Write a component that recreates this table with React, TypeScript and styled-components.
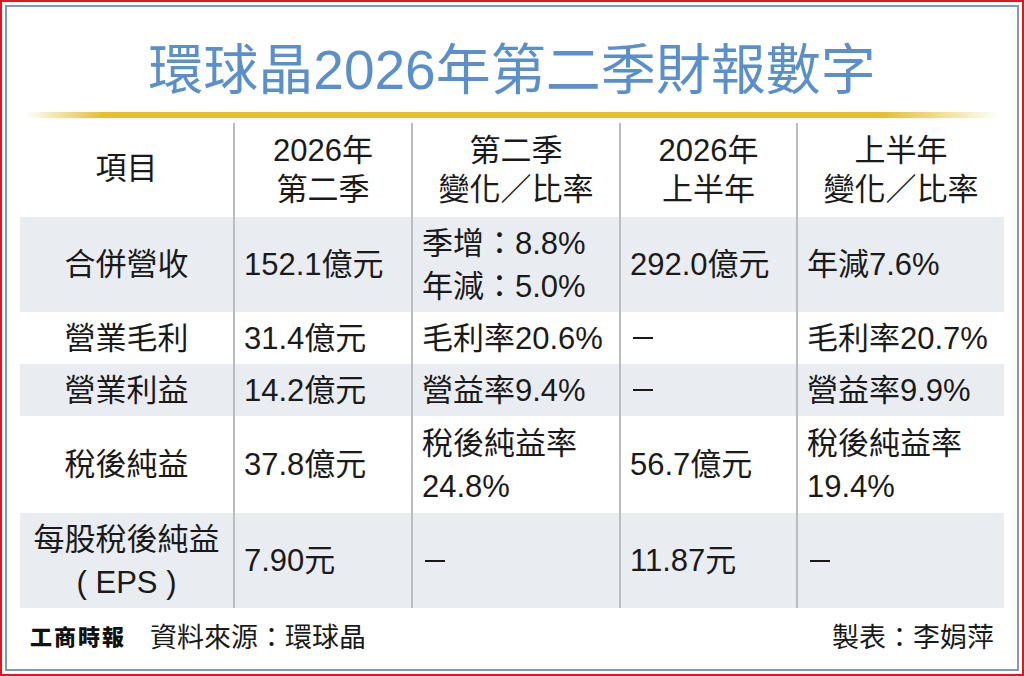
import styled, { createGlobalStyle } from 'styled-components';

const GlobalStyle = createGlobalStyle`
  html, body {
    margin: 0;
    padding: 0;
    background: #ffffff;
  }
  body {
    font-family: "Liberation Sans", "Noto Sans CJK TC", sans-serif;
    color: #1a1a1a;
  }
`;

const Page = styled.div`
  box-sizing: border-box;
  width: 1024px;
  height: 676px;
  border: 2px solid #e3141b;
  padding: 3px;
  background: #ffffff;
`;

const Frame = styled.div`
  box-sizing: border-box;
  height: 100%;
  border: 2px solid #7d9bb2;
  padding: 0 13px;
  display: flex;
  flex-direction: column;
`;

const Title = styled.h1`
  margin: 0;
  padding-top: 23px;
  height: 70px;
  line-height: 70px;
  text-align: center;
  font-family: "Noto Sans CJK TC", "Liberation Sans", sans-serif;
  font-size: 55px;
  font-weight: 400;
  color: #5b8fca;
`;

const TitleDigits = styled.span`
  font-family: "Liberation Sans", sans-serif;
  font-weight: 400;
`;

const GoldBar = styled.div`
  margin: 12px 0 2px 5px;
  width: 975px;
  height: 6px;
  background: linear-gradient(
    to right,
    rgba(230, 192, 42, 0) 0%,
    #e6bf2a 8%,
    #e6bf2a 88%,
    rgba(230, 192, 42, 0) 100%
  );
`;

const Table = styled.div`
  display: flex;
  flex-direction: column;
  width: 984px;
`;

const Row = styled.div<{ $shade?: boolean; $height: number }>`
  display: grid;
  grid-template-columns: 213px 178px 208px 177px 208px;
  height: ${p => p.$height}px;
  background: ${p => (p.$shade ? '#e9edf1' : '#ffffff')};
`;

const Cell = styled.div<{ $center?: boolean; $head?: boolean }>`
  display: flex;
  flex-direction: column;
  justify-content: center;
  align-items: ${p => (p.$center ? 'center' : 'flex-start')};
  text-align: ${p => (p.$center ? 'center' : 'left')};
  padding: 0 ${p => (p.$center ? '0' : '9px')};
  font-size: 31px;
  line-height: ${p => (p.$head ? '39px' : '43px')};
  white-space: pre;

  & + & {
    border-left: 2px solid #b8bdc2;
  }
`;

const HeadCell = styled(Cell)`
  & + & {
    margin-top: 3px;
  }
`;

const Dash = styled.span`
  display: inline-block;
  width: 20px;
  height: 2px;
  margin-left: 3px;
  background: #1a1a1a;
`;

const Footer = styled.div`
  display: flex;
  align-items: center;
  justify-content: space-between;
  width: 984px;
  height: 54px;
  padding: 0 10px;
  box-sizing: border-box;
`;

const Source = styled.div`
  display: flex;
  align-items: center;
  gap: 24px;
  font-size: 27px;
`;

const Logo = styled.span`
  font-family: "Noto Sans CJK TC", sans-serif;
  font-size: 22px;
  font-weight: 900;
  letter-spacing: 2px;
  color: #111111;
`;

const Credit = styled.span`
  font-size: 27px;
`;

interface Line {
  cells: (string[] | null)[];
  height: number;
  shade?: boolean;
}

const rows: Line[] = [
  {
    height: 95,
    shade: true,
    cells: [['合併營收'], ['152.1億元'], ['季增：8.8%', '年減：5.0%'], ['292.0億元'], ['年減7.6%']],
  },
  {
    height: 52,
    cells: [['營業毛利'], ['31.4億元'], ['毛利率20.6%'], null, ['毛利率20.7%']],
  },
  {
    height: 52,
    shade: true,
    cells: [['營業利益'], ['14.2億元'], ['營益率9.4%'], null, ['營益率9.9%']],
  },
  {
    height: 97,
    cells: [['稅後純益'], ['37.8億元'], ['稅後純益率', '24.8%'], ['56.7億元'], ['稅後純益率', '19.4%']],
  },
  {
    height: 95,
    shade: true,
    cells: [['每股稅後純益', '( EPS )'], ['7.90元'], null, ['11.87元'], null],
  },
];

const headers = [['項目'], ['2026年', '第二季'], ['第二季', '變化／比率'], ['2026年', '上半年'], ['上半年', '變化／比率']];

export default function App() {
  return (
    <>
      <GlobalStyle />
      <Page>
        <Frame>
          <Title>
            環球晶<TitleDigits>2026</TitleDigits>年第二季財報數字
          </Title>
          <GoldBar />
          <Table>
            <Row $height={97}>
              {headers.map((h, i) => (
                <HeadCell key={i} $center $head>
                  {h.map(t => (
                    <span key={t}>{t}</span>
                  ))}
                </HeadCell>
              ))}
            </Row>
            {rows.map((r, ri) => (
              <Row key={ri} $shade={r.shade} $height={r.height}>
                {r.cells.map((c, ci) => (
                  <Cell key={ci} $center={ci === 0}>
                    {c ? c.map(t => <span key={t}>{t}</span>) : <Dash />}
                  </Cell>
                ))}
              </Row>
            ))}
          </Table>
          <Footer>
            <Source>
              <Logo>工商時報</Logo>
              <span>資料來源：環球晶</span>
            </Source>
            <Credit>製表：李娟萍</Credit>
          </Footer>
        </Frame>
      </Page>
    </>
  );
}
